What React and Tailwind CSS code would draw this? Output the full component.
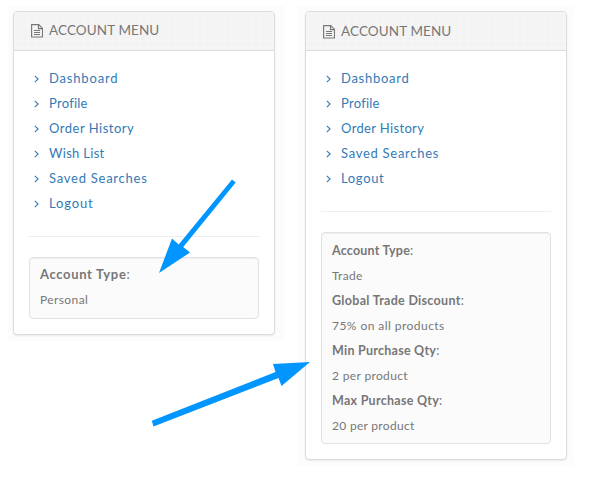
const PanelIcon = ({ className }) => (
  <svg width="12" height="14" viewBox="0 0 12 14" className={className} fill="none" stroke="currentColor" strokeWidth="1.15">
    <path d="M.6 .6h7.200l3.700 3.700v8.700h-10.900z" strokeLinejoin="round" />
    <path d="M7.500 .6v4h4M3 6.500h6M3 8.500h6M3 10.500h6" />
  </svg>
);

const Chevron = () => (
  <svg width="6" height="8" viewBox="0 0 6 8" fill="none" stroke="currentColor" strokeWidth="1.1" className="ml-[5px] mr-[9px] shrink-0">
    <path d="M.8 .9 4.100 4 .8 7.100" />
  </svg>
);

function Panel({ title, links, details, className, headClass, detailsClass }) {
  return (
    <div className={"bg-[#fcfcfc] pt-[5px] " + className}>
      <section className="w-[262px] rounded border border-[#dcdcdc] bg-white pb-[15px] shadow-[0_1px_2px_rgba(0,0,0,0.08)]">
        <header className={"flex h-[39px] items-center rounded-t-[3px] border-b border-[#dcdcdc] bg-[#f3f3f3] bg-[linear-gradient(#f6f6f6_1px,transparent_1px),linear-gradient(90deg,#f6f6f6_1px,transparent_1px)] bg-[length:7px_7px] pl-[17px] text-[#777] " + headClass}>
          <PanelIcon className="mr-[6px]" />
          <h2 className="text-[13.5px] leading-none tracking-[0.1px]">{title}</h2>
        </header>
        <div className="px-[15px] pt-[15px]">
          <ul className="text-[13px] text-[#337ab7]">
            {links.map(([label, tracking]) => (
              <li key={label} className="flex h-[25px] items-center">
                <Chevron />
                <a className={tracking}>{label}</a>
              </li>
            ))}
          </ul>
          <hr className="mt-5 mb-5 border-t border-[#eee]" />
          <dl className={"rounded border border-[#e2e2e2] bg-[#fbfbfb] pl-[10px] text-[12px] leading-[25px] text-[#777] shadow-[inset_0_1px_1px_rgba(0,0,0,0.05)] " + detailsClass}>
            {details.map(([name, nameTracking, value, valueTracking]) => (
              <div key={name}>
                <dt className={nameTracking}><b>{name}</b>:</dt>
                <dd className={valueTracking}>{value}</dd>
              </div>
            ))}
          </dl>
        </div>
      </section>
    </div>
  );
}

const personalLinks = [
  ["Dashboard", "tracking-[0.82px]"],
  ["Profile", "tracking-[0.25px]"],
  ["Order History", "tracking-[0.5px]"],
  ["Wish List", "tracking-[0.3px]"],
  ["Saved Searches", "tracking-[0.75px]"],
  ["Logout", "tracking-[0.85px]"],
];
const tradeLinks = [
  ["Dashboard", "tracking-[0.72px]"],
  ["Profile", "tracking-[0.25px]"],
  ["Order History", "tracking-[0.35px]"],
  ["Saved Searches", "tracking-[0.72px]"],
  ["Logout", "tracking-[0.65px]"],
];

export default function App() {
  return (
    <main className="relative flex h-[500px] w-[600px] items-start overflow-hidden bg-white pt-[6px] pl-2 font-['Lato','Liberation_Sans',sans-serif]">
      <Panel
        title="ACCOUNT MENU"
        links={personalLinks}
        details={[["Account Type", "text-[13px] tracking-[0.65px]", "Personal", "tracking-[0.4px]"]]}
        className="h-[335px] w-[276px] pl-[5px]"
        headClass=""
        detailsClass="pt-[4px] pb-[6px]"
      />
      <Panel
        title="ACCOUNT MENU"
        links={tradeLinks}
        details={[
          ["Account Type", "text-[12.5px] tracking-[0.2px]", "Trade", "tracking-[0.3px]"],
          ["Global Trade Discount", "text-[12.5px] tracking-[0.3px]", "75% on all products", "tracking-[0.45px]"],
          ["Min Purchase Qty", "text-[12.5px] tracking-[0.25px]", "2 per product", "tracking-[0.35px]"],
          ["Max Purchase Qty", "text-[12.5px] tracking-[0.27px]", "20 per product", "tracking-[0.3px]"],
        ]}
        className="ml-[14px] h-[460px] w-[275px] pl-[7px]"
        headClass="pt-[2px]"
        detailsClass="pt-[5px] pb-[5px]"
      />
      <svg className="pointer-events-none absolute inset-0" width="600" height="500" fill="#0095ff">
        <path d="M232 179.500 235.700 182.500 183.200 247 190 252.500 159 273 172 238.500 178.700 244.500z" />
        <path d="M151.800 420.800 275.500 372 273 364 310 362 281.500 386 278.500 378 153.500 426.500z" />
      </svg>
    </main>
  );
}
